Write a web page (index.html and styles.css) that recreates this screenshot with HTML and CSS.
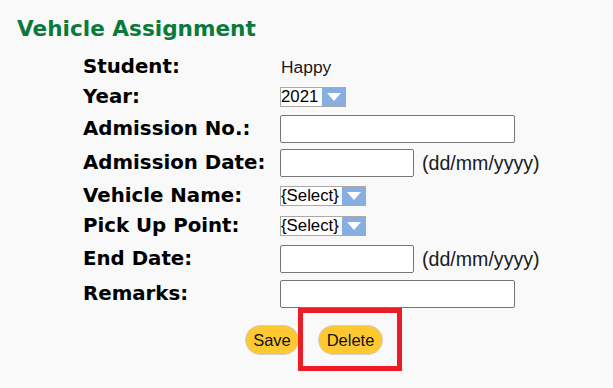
FILE: index.html
```html
<!DOCTYPE html>
<html lang="en">
<head>
<meta charset="utf-8">
<title>Vehicle Assignment</title>
<link rel="stylesheet" href="styles.css">
</head>
<body>
<h1 class="title">Vehicle Assignment</h1>
<div class="form">
  <div class="grid">
    <div class="label">Student:</div>
    <div class="value"><span class="text">Happy</span></div>

    <div class="label">Year:</div>
    <div class="value">
      <div class="select year"><span class="sel-text">2021</span><span class="sel-arrow"><svg width="14" height="8" viewBox="0 0 14 8"><path d="M0 0H14L7 8Z" fill="#fff"/></svg></span></div>
    </div>

    <div class="label">Admission No.:</div>
    <div class="value"><input class="input long" type="text"></div>

    <div class="label">Admission Date:</div>
    <div class="value"><input class="input short" type="text"><span class="hint">(dd/mm/yyyy)</span></div>

    <div class="label">Vehicle Name:</div>
    <div class="value">
      <div class="select wide"><span class="sel-text">{Select}</span><span class="sel-arrow"><svg width="14" height="8" viewBox="0 0 14 8"><path d="M0 0H14L7 8Z" fill="#fff"/></svg></span></div>
    </div>

    <div class="label">Pick Up Point:</div>
    <div class="value">
      <div class="select wide"><span class="sel-text">{Select}</span><span class="sel-arrow"><svg width="14" height="8" viewBox="0 0 14 8"><path d="M0 0H14L7 8Z" fill="#fff"/></svg></span></div>
    </div>

    <div class="label">End Date:</div>
    <div class="value"><input class="input short" type="text"><span class="hint">(dd/mm/yyyy)</span></div>

    <div class="label">Remarks:</div>
    <div class="value"><input class="input long" type="text"></div>
  </div>
  <div class="actions">
    <button class="btn save" type="button">Save</button>
    <button class="btn delete" type="button">Delete</button>
  </div>
</div>
<div class="highlight"></div>
</body>
</html>
```

FILE: styles.css
```css
html, body {
  margin: 0;
  padding: 0;
  background: #f9f9f9;
}
body {
  position: relative;
  width: 613px;
  height: 388px;
  overflow: hidden;
  font-family: "Liberation Sans", Arial, sans-serif;
  color: #111;
}
.title {
  margin: 0 0 11px 0;
  padding: 16px 0 0 17px;
  font-family: "DejaVu Sans", Verdana, sans-serif;
  font-weight: bold;
  font-size: 21.6px;
  line-height: 26px;
  color: #0a7a3c;
}
.form {
  margin-left: 83px;
}
.grid {
  display: grid;
  grid-template-columns: 197px auto;
  grid-template-rows: 28px 31px 34px 34px 31px 30px 35px 35px;
  align-items: center;
}
.label {
  font-family: "DejaVu Sans", Verdana, sans-serif;
  font-weight: bold;
  font-size: 19.8px;
  line-height: 22px;
  color: #000;
  white-space: nowrap;
}
.value {
  display: flex;
  align-items: center;
  height: 100%;
}
.text {
  font-size: 17.4px;
  line-height: 20px;
  color: #1a1a1a;
  padding-left: 1px;
}
.input {
  box-sizing: border-box;
  height: 28px;
  margin: 0;
  border: 1px solid #767676;
  border-radius: 2px;
  background: #fff;
}
.input.long { width: 235px; }
.input.short { width: 134px; }
.hint {
  margin-left: 8px;
  font-size: 19.6px;
  line-height: 22px;
  color: #1a1a1a;
}
.select {
  box-sizing: border-box;
  display: flex;
  height: 20px;
  border: 1px solid #a9a9a9;
  background: #fff;
}
.select.year { width: 66px; }
.select.wide { width: 86px; }
.sel-text {
  flex: 1;
  font-size: 16.8px;
  line-height: 18px;
  color: #000;
  white-space: nowrap;
}
.sel-arrow {
  width: 23px;
  display: flex;
  align-items: center;
  justify-content: center;
  background: #86aee0;
}
.actions {
  display: flex;
  gap: 19px;
  padding-left: 162px;
  margin-top: 14px;
}
.btn {
  box-sizing: border-box;
  height: 30px;
  padding: 0;
  border: 1px solid #cfcfcf;
  border-radius: 15px;
  background: #fdc830;
  font-family: "Liberation Sans", Arial, sans-serif;
  font-size: 16.5px;
  color: #111;
}
.btn.save { width: 54px; }
.btn.delete { width: 65px; }
.highlight {
  position: absolute;
  left: 298px;
  top: 308px;
  width: 104px;
  height: 63px;
  box-sizing: border-box;
  border: 5px solid #ed1c24;
}
```
